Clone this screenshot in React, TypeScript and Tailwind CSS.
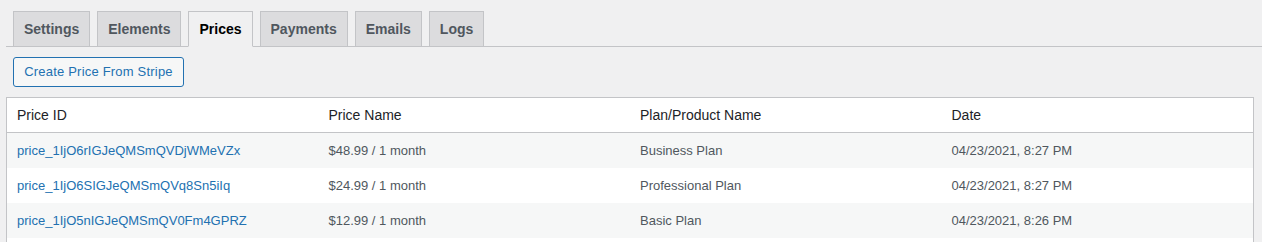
import React from "react";

const tabs = ["Settings", "Elements", "Prices", "Payments", "Emails", "Logs"];
const rows = [
  ["price_1IjO6rIGJeQMSmQVDjWMeVZx", "$48.99 / 1 month", "Business Plan", "04/23/2021, 8:27 PM"],
  ["price_1IjO6SIGJeQMSmQVq8Sn5iIq", "$24.99 / 1 month", "Professional Plan", "04/23/2021, 8:27 PM"],
  ["price_1IjO5nIGJeQMSmQV0Fm4GPRZ", "$12.99 / 1 month", "Basic Plan", "04/23/2021, 8:26 PM"],
  ["", "", "", ""],
];

export default function App() {
  return (
    <div
      className="w-[1262px] h-[242px] overflow-hidden bg-[#f0f0f1] pl-[6px]"
      style={{ fontFamily: '"Liberation Sans", Arial, sans-serif' }}
    >
      <div className="flex items-end border-b border-[#c3c4c7] pt-[11px]">
        {tabs.map((t) => {
          const active = t === "Prices";
          return (
            <div
              key={t}
              className={
                active
                  ? "ml-[7px] -mb-px h-[36px] px-[10px] border border-[#c3c4c7] border-b-[#f0f0f1] bg-[#f0f0f1] text-[14px] font-bold leading-[34px] text-black"
                  : "ml-[7px] h-[35px] px-[10px] border border-b-0 border-[#c3c4c7] bg-[#dcdcde] text-[14px] font-bold leading-[34px] text-[#50575e]"
              }
            >
              {t}
            </div>
          );
        })}
      </div>
      <div className="mt-[10px] ml-[7px] flex">
        <button className="w-[171px] h-[30px] rounded-[3px] border border-[#2271b1] bg-[#f6f7f7] text-[13px] leading-[28px] text-[#2271b1] tracking-[0.2px]">
          Create Price From Stripe
        </button>
      </div>
      <div className="mt-[10px] mr-[8px] border border-[#c3c4c7] bg-white">
        <div className="grid grid-cols-4 h-[35px] items-center border-b border-[#c3c4c7] text-[14px] text-[#1d2327]">
          <div className="px-[10px]">Price ID</div>
          <div className="px-[10px]">Price Name</div>
          <div className="px-[10px]">Plan/Product Name</div>
          <div className="px-[10px]">Date</div>
        </div>
        {rows.map((r, i) => (
          <div
            key={i}
            className={
              (i % 2 === 0 ? "bg-[#f6f7f7] " : "bg-white ") +
              "grid grid-cols-4 h-[35px] items-center text-[13px] text-[#50575e]"
            }
          >
            <div className="px-[10px] text-[#2271b1]">{r[0]}</div>
            <div className="px-[10px]">{r[1]}</div>
            <div className="px-[10px]">{r[2]}</div>
            <div className="px-[10px]">{r[3]}</div>
          </div>
        ))}
      </div>
    </div>
  );
}
